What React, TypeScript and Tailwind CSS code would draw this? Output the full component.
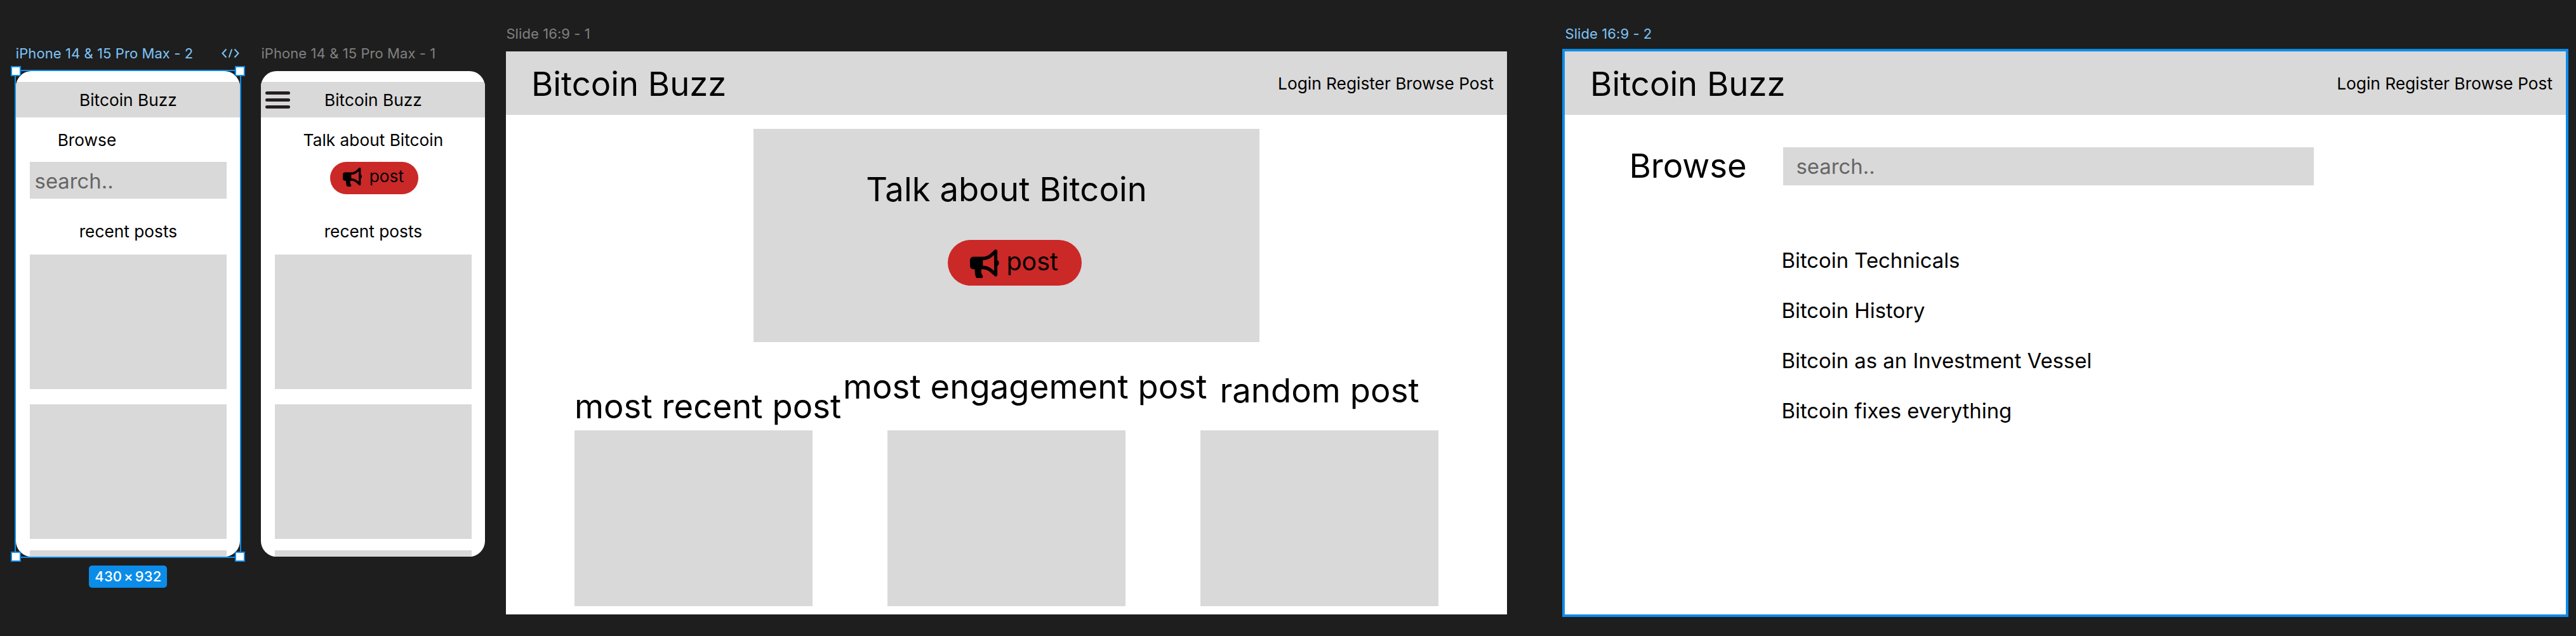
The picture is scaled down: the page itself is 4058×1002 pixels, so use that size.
import React from "react";
import { FaBullhorn } from "react-icons/fa";

function Handle({ className }: { className: string }) {
  return <span className={`absolute h-4 w-4 border-2 border-[#0c8ce9] bg-white ${className}`} />;
}

function CodeIcon() {
  return (
    <svg className="mr-[1.5px] mt-[6px] h-[16px] w-[28px]" viewBox="0 0 28 16" fill="none" stroke="#7ec4f8" strokeWidth="2">
      <path d="M7.5 1.5 1.5 8l6 6.5M20.5 1.5l6 6.5-6 6.5M16.2 1.5l-4.4 13" />
    </svg>
  );
}

function Burger() {
  return (
    <div className="ml-[6.3px] flex w-[39px] flex-col gap-[6px]">
      <span className="h-[5px] rounded-full bg-[#231f20]" />
      <span className="h-[5px] rounded-full bg-[#231f20]" />
      <span className="h-[5px] rounded-full bg-[#231f20]" />
    </div>
  );
}

function Phone({ menu, children }: { menu?: boolean; children: React.ReactNode }) {
  return (
    <div className="h-[765.3px] w-[353px] overflow-hidden rounded-[24.6px] bg-white text-[26.28px] leading-8">
      <div className="mt-[17.7px] grid h-[56.3px] grid-cols-[1fr_auto_1fr] items-center bg-[#d9d9d9]">
        <div>{menu && <Burger />}</div>
        <span className="pt-[1.4px]">Bitcoin Buzz</span>
        <div />
      </div>
      {children}
      <div className="mt-[35.5px] text-center">recent posts</div>
      <div className="ml-[21.2px] mt-[19.6px] w-[310.4px]">
        <div className="h-[212px] bg-[#d9d9d9]" />
        <div className="mt-[24px] h-[212px] bg-[#d9d9d9]" />
        <div className="mt-[18px] h-[212px] bg-[#d9d9d9]" />
      </div>
    </div>
  );
}

function SlideHeader() {
  return (
    <div className="flex h-[100.2px] items-center justify-between bg-[#d9d9d9] pl-[39.6px] pr-[21px]">
      <span className="pt-[1px] text-[52.55px] leading-[64px]">Bitcoin Buzz</span>
      <span className="pt-[1px] text-[26.28px] leading-8">Login Register Browse Post</span>
    </div>
  );
}

const topics = ["Bitcoin Technicals", "Bitcoin History", "Bitcoin as an Investment Vessel", "Bitcoin fixes everything"];

export default function App() {
  return (
    <div className="flex h-[1002px] w-[4058px] items-start overflow-hidden whitespace-nowrap bg-[#1e1e1e] font-['Inter',sans-serif] text-black [font-optical-sizing:none]">
      <section className="ml-[25.4px] w-[353px] shrink-0 pt-[69.5px]">
        <div className="flex h-[42px] justify-between text-[22px] leading-[28px] tracking-[0.08px] text-[#7ec4f8]">
          <span className="-ml-[0.6px]">iPhone 14 &amp; 15 Pro Max - 2</span>
          <CodeIcon />
        </div>
        <div className="relative">
          <div className="flow-root">
            <Phone>
              <div className="ml-[65.3px] mt-[19.4px]">Browse</div>
              <div className="ml-[21.2px] mt-[18.6px] h-[58px] w-[310.4px] bg-[#d9d9d9] pl-[8px] pt-[9.6px] text-[32.84px] leading-10 text-[#666]">
                search..
              </div>
            </Phone>
          </div>
          <div className="absolute -inset-[2px] border-2 border-[#0c8ce9]" />
          <Handle className="-left-2 -top-2" />
          <Handle className="-right-2 -top-2" />
          <Handle className="-bottom-2 -left-2" />
          <Handle className="-bottom-2 -right-2" />
        </div>
        <div className="mx-auto mt-[14.2px] flex h-[35px] w-[123px] items-center justify-center rounded-[5px] bg-[#0c8ce9] text-[22px] font-medium tracking-[0.11px] text-white [word-spacing:-3px]">
          430 × 932
        </div>
      </section>

      <section className="ml-[33px] w-[353px] shrink-0 pt-[69.5px]">
        <div className="h-[42px] text-[22px] leading-[28px] tracking-[0.08px] text-[#808080]">iPhone 14 &amp; 15 Pro Max - 1</div>
        <Phone menu>
          <div className="mt-[19.4px] text-center">Talk about Bitcoin</div>
          <div className="ml-[108.8px] mt-[18.6px] mb-[42.5px] flex h-[51px] w-[139px] items-start rounded-full bg-[#cb2828] pl-[20px]">
            <FaBullhorn className="mt-[8.5px] h-[30px] w-[30px] shrink-0" preserveAspectRatio="none" />
            <span className="ml-[11.5px] mt-[6.4px]">post</span>
          </div>
        </Phone>
      </section>

      <section className="ml-[33px] w-[1576.6px] shrink-0 pt-[38.7px]">
        <div className="h-[42.5px] text-[22px] leading-[28px] tracking-[0.08px] text-[#808080]">Slide 16:9 - 1</div>
        <div className="h-[886.8px] bg-white text-[52.55px] leading-[64px]">
          <SlideHeader />
          <div className="ml-[389.4px] mt-[22px] flex h-[335.3px] w-[797.6px] flex-col items-center bg-[#d9d9d9] pt-[62.5px]">
            <div className="tracking-[0.09px]">Talk about Bitcoin</div>
            <div className="mt-[48px] ml-[26.4px] flex h-[72px] w-[211px] items-start rounded-full bg-[#cb2828] pl-[35px]">
              <FaBullhorn className="mt-[15px] h-[45.5px] w-[45.7px] shrink-0" preserveAspectRatio="none" />
              <span className="ml-[11.5px] mt-[10.5px] text-[39.4px] leading-[48px]">post</span>
            </div>
          </div>
          <div className="ml-[107.5px] mt-[38.5px] flex items-start tracking-[0.09px]">
            <span className="mt-[31px] w-[423px]">most recent post</span>
            <span className="w-[593.5px]">most engagement post</span>
            <span className="mt-[6px]">random post</span>
          </div>
          <div className="ml-[107.5px] mt-[5.5px] flex gap-[118px]">
            <div className="h-[277px] w-[375px] bg-[#d9d9d9]" />
            <div className="h-[277px] w-[375px] bg-[#d9d9d9]" />
            <div className="h-[277px] w-[375px] bg-[#d9d9d9]" />
          </div>
        </div>
      </section>

      <section className="ml-[91.5px] w-[1576.6px] shrink-0 pt-[38.7px]">
        <div className="h-[42.5px] text-[22px] leading-[28px] tracking-[0.08px] text-[#7ec4f8]">Slide 16:9 - 2</div>
        <div className="h-[886.8px] bg-white outline-4 outline-[#0c8ce9]">
          <SlideHeader />
          <div className="ml-[101px] mt-[47px] flex items-start">
            <span className="w-[242.5px] pt-[0.5px] text-[52.55px] leading-[64px]">Browse</span>
            <div className="mt-[4px] h-[60px] w-[836px] bg-[#d9d9d9] pl-[20.5px] pt-[10px] text-[32.84px] leading-10 text-[#666]">
              search..
            </div>
          </div>
          <ul className="ml-[341px] mt-[78.3px] text-[32.84px] leading-[78.8px]">
            {topics.map((t) => (
              <li key={t}>{t}</li>
            ))}
          </ul>
        </div>
      </section>
    </div>
  );
}
